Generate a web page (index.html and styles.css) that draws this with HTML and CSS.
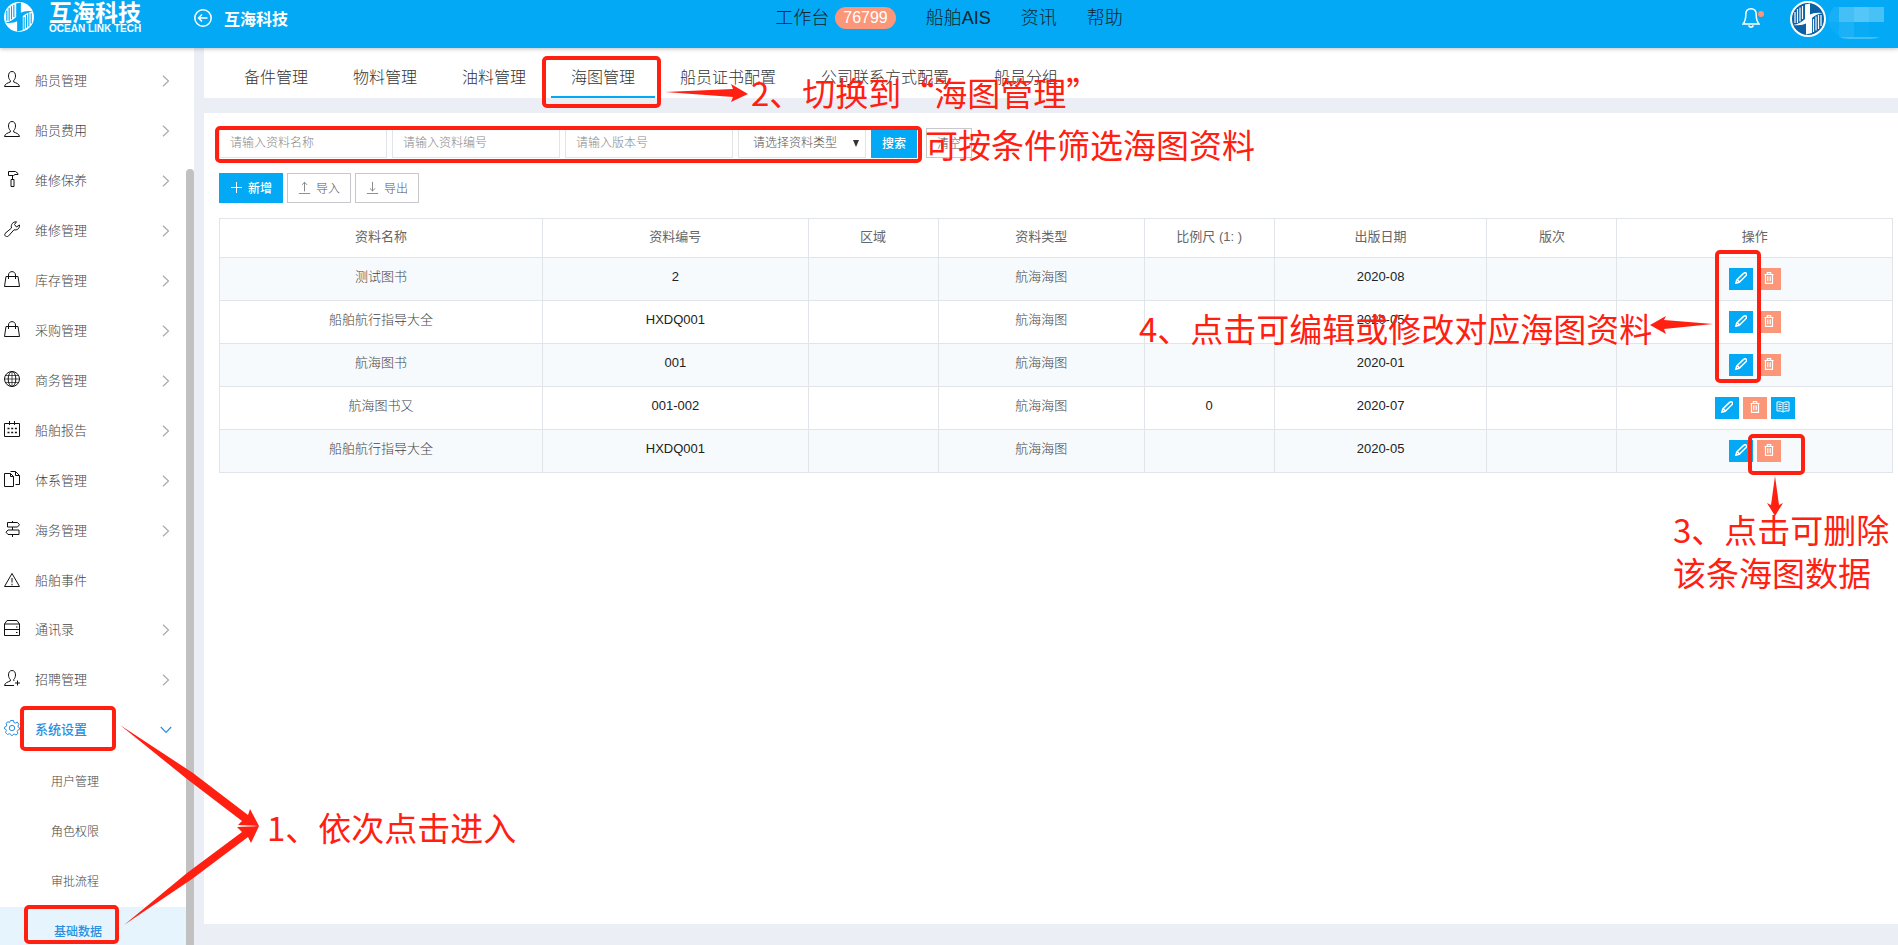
FILE: index.html
```html
<!DOCTYPE html>
<html lang="zh-CN">
<head>
<meta charset="utf-8">
<title>互海科技</title>
<link rel="stylesheet" href="styles.css">
</head>
<body>
<svg class="defs" aria-hidden="true">
  <symbol id="mark" viewBox="0 0 32 32">
    <path d="M3 9v11M5.500 6v14M8 4.500v14M10.500 3v13M29 23v-11M26.500 26v-14M24 27.500v-14M21.500 29v-13" stroke="currentColor" stroke-width="1.200"/>
    <path d="M13 1.500 18 .5V11.500Q22 9 31 10Q24 11 20 15V30L14 31.500V20.500Q10 23 1 22Q8 21 13 16Z" fill="currentColor"/>
  </symbol>
  <symbol id="user" viewBox="0 0 16 16"><path d="M8 .5C5.500.5 4.500 2.500 4.500 5c0 2 .8 3.500 1.800 4.500v1.500C4 12 1 12.500.5 15.500h15C15 12.500 12 12 9.700 11V9.500C10.700 8.500 11.500 7 11.500 5 11.500 2.500 10.500.5 8 .5z"/></symbol>
  <symbol id="hammer" viewBox="0 0 16 16"><path d="M4.500.5h7l2.500 2v1h-3l-1.500 1H4.500zM8.500 4.500v4M7 8.500h3v7H7z"/></symbol>
  <symbol id="wrench" viewBox="0 0 16 16"><path d="M1 12.500 7.500 7C6.500 3.500 9 .5 12.500.8L10.500 3.500l2 2.500 3-2c.3 3.500-2.500 5.500-5.500 4.800L4 15.500c-2 .8-4-1-3-3z"/></symbol>
  <symbol id="bag" viewBox="0 0 16 16"><path d="M2 5.500h12l1.500 10H.5zM4.500 8V4c0-4.500 7-4.500 7 0v4"/></symbol>
  <symbol id="globe" viewBox="0 0 16 16"><circle cx="8" cy="8" r="7.500"/><ellipse cx="8" cy="8" rx="3.800" ry="7.500"/><path d="M8 .5v15M.5 8h15M2 4.500h12M2 11.500h12" stroke-width=".7"/></symbol>
  <symbol id="calendar" viewBox="0 0 16 16"><path d="M.5 2.500h15v13H.5zM5.500 0v4M10.500 0v4"/><path d="M3.500 7.500h9.500M3.500 11.500h9.500" stroke-width="1.600" stroke-dasharray="2 1.700"/></symbol>
  <symbol id="files" viewBox="0 0 16 16"><path d="M.5 2.500h6l3 3v10h-9zM6.500 2.500v3h3M6.500.5h5l4 4v9h-4M11.500.5v4h4"/></symbol>
  <symbol id="sign" viewBox="0 0 16 16"><path d="M8.500 0v1.500M8.500 6v3M8.500 13.500V16M3.500 1.500h10l2 2.200L13.500 6h-10zM4 9h11v4.500H4L2 11.200z"/></symbol>
  <symbol id="warn" viewBox="0 0 16 16"><path d="M8 2.500 15.500 15.500H.5zM8 7v4.500M8 12.800v1.500"/></symbol>
  <symbol id="server" viewBox="0 0 16 16"><path d="M.5 4 3 .5h10L15.500 4v11.500H.5zM.5 4h15M.5 9.500h15M12 7h1.500M12 12.500h1.500"/></symbol>
  <symbol id="useradd" viewBox="0 0 16 16"><path d="M10 11 9.700 9.500C10.700 8.500 11.500 7 11.500 5 11.500 2.500 10.500.5 8 .5S4.500 2.500 4.500 5c0 2 .8 3.500 1.800 4.500v1.500C4 12 1 12.500.5 15.500H10M13.500 10.500v5M11 13h5"/></symbol>
  <symbol id="gear" viewBox="0 0 16 16"><path d="M6.500.5h3l.4 2 1.500.7L13.200 2l1.700 2.300-1 1.700.4 1.300 1.200.5v1.500l-1.700.8-.6 1.400.8 1.800L12 15l-1.900-1-1 .5-.6 1.200h-1l-.8-1.500-1.300-.5L3.500 14.500 1.500 12.500 2.300 10.600 2 9.500.5 8.800V7.200L2.200 6.500l.6-1.400L2 3.300 4 1.700l1.500.8z"/><circle cx="8" cy="8" r="2.700"/></symbol>
  <symbol id="right" viewBox="0 0 8 12"><path d="M1 .8 6.500 6 1 11.200"/></symbol>
  <symbol id="down" viewBox="0 0 12 8"><path d="M.8 1 6 6.500 11.200 1"/></symbol>
  <symbol id="pencil" viewBox="0 0 12 12"><path d="M.8 11.200 1.800 8 8.300 1.600Q10 0 11.200 1.200T10.600 4L4.200 10.300zM2.500 8l1.800 1.800" fill="none" stroke="currentColor" stroke-width="1.500"/></symbol>
  <symbol id="trash" viewBox="0 0 12 12"><path d="M1.500 2.500h9M4.300 2.300V.7h3.400v1.600M2.500 2.500v8.800h7V2.500M4.800 4.300v5M7.200 4.300v5" fill="none" stroke="currentColor" stroke-width="1.200"/></symbol>
  <symbol id="book" viewBox="0 0 14 12"><path d="M7 2Q4.500.3 1 1v9q3.500-.7 6 1 2.500-1.700 6-1V1Q9.500.3 7 2zv9M2.500 3.300h3M2.500 5.500h3M2.500 7.700h3M8.500 3.300h3M8.500 5.500h3M8.500 7.700h3" fill="none" stroke="currentColor"/></symbol>
</svg>

<div class="app">
  <header class="header">
    <div class="header-left">
      <div class="brand">
        <span class="brand-mark"><svg><use href="#mark"/></svg></span>
        <div class="brand-text"><strong>互海科技</strong><span>OCEAN LINK TECH</span></div>
      </div>
      <a class="company" href="#">
        <svg class="back" viewBox="0 0 18 18"><circle cx="9" cy="9" r="8.200"/><path d="M13.500 9H5M8 5.500 4.500 9 8 12.500"/></svg>
        互海科技
      </a>
    </div>
    <nav class="topnav">
      <a href="#">工作台<span class="badge">76799</span></a>
      <a href="#">船舶AIS</a>
      <a href="#">资讯</a>
      <a href="#">帮助</a>
    </nav>
    <div class="account">
      <button class="bell" aria-label="通知">
        <svg viewBox="0 0 18 21"><path d="M9 .8C5.500.8 3.800 3 3.800 6.500 3.800 12 3.200 13.500 1 16h16c-2.200-2.500-2.800-4-2.800-9.500C14.200 3 12.500.8 9 .8zM6.500 17.500q2.500 3.500 5 0"/></svg>
        <i class="dot"></i>
      </button>
      <span class="avatar"><svg><use href="#mark"/></svg></span>
      <svg class="masked" viewBox="0 0 56 32">
        <path d="M11 0H6Q-1 8 1 15h10z" fill="#17aff6"/><path d="M0 15h11v14Q3 25 0 15z" fill="#0cacf6"/>
        <path d="M11 0h15v15H11z" fill="#45c0f7"/><path d="M26 0h15v15H26z" fill="#55c6f8"/><path d="M41 0h15v15H41z" fill="#48c1f7"/>
        <path d="M11 15h15v15H11z" fill="#1bb1f6"/><path d="M26 15h15v15H26z" fill="#0aabf5"/>
        <path d="M12 30h40q-4 2-10 2H20q-5 0-8-2z" fill="#42bff7"/>
      </svg>
    </div>
  </header>

  <div class="body">
    <aside class="sidebar">
      <nav class="menu">
        <a href="#"><svg><use href="#user"/></svg><span>船员管理</span><svg class="chev"><use href="#right"/></svg></a>
        <a href="#"><svg><use href="#user"/></svg><span>船员费用</span><svg class="chev"><use href="#right"/></svg></a>
        <a href="#"><svg><use href="#hammer"/></svg><span>维修保养</span><svg class="chev"><use href="#right"/></svg></a>
        <a href="#"><svg><use href="#wrench"/></svg><span>维修管理</span><svg class="chev"><use href="#right"/></svg></a>
        <a href="#"><svg><use href="#bag"/></svg><span>库存管理</span><svg class="chev"><use href="#right"/></svg></a>
        <a href="#"><svg><use href="#bag"/></svg><span>采购管理</span><svg class="chev"><use href="#right"/></svg></a>
        <a href="#"><svg><use href="#globe"/></svg><span>商务管理</span><svg class="chev"><use href="#right"/></svg></a>
        <a href="#"><svg><use href="#calendar"/></svg><span>船舶报告</span><svg class="chev"><use href="#right"/></svg></a>
        <a href="#"><svg><use href="#files"/></svg><span>体系管理</span><svg class="chev"><use href="#right"/></svg></a>
        <a href="#"><svg><use href="#sign"/></svg><span>海务管理</span><svg class="chev"><use href="#right"/></svg></a>
        <a href="#" class="leaf"><svg><use href="#warn"/></svg><span>船舶事件</span></a>
        <a href="#"><svg><use href="#server"/></svg><span>通讯录</span><svg class="chev"><use href="#right"/></svg></a>
        <a href="#"><svg><use href="#useradd"/></svg><span>招聘管理</span><svg class="chev"><use href="#right"/></svg></a>
        <a href="#" class="open"><svg><use href="#gear"/></svg><span>系统设置</span><svg class="chev chev-down"><use href="#down"/></svg></a>
      </nav>
      <nav class="submenu">
        <a href="#">用户管理</a>
        <a href="#">角色权限</a>
        <a href="#">审批流程</a>
        <a href="#" class="current">基础数据</a>
      </nav>
      <div class="thumb"></div>
    </aside>

    <main class="main">
      <nav class="tabs">
        <a href="#">备件管理</a>
        <a href="#">物料管理</a>
        <a href="#">油料管理</a>
        <a href="#" class="active">海图管理</a>
        <a href="#">船员证书配置</a>
        <a href="#">公司联系方式配置</a>
        <a href="#">船员分组</a>
      </nav>
      <section class="panel">
        <form class="filters">
          <input type="text" placeholder="请输入资料名称" aria-label="资料名称">
          <input type="text" placeholder="请输入资料编号" aria-label="资料编号">
          <input type="text" placeholder="请输入版本号" aria-label="版本号">
          <div class="select-wrap">
            <select aria-label="资料类型"><option>请选择资料类型</option></select>
            <svg viewBox="0 0 6 7"><path d="M0 0h6L3 7z"/></svg>
          </div>
          <button type="button" class="search">搜索</button>
          <button type="button" class="clear">清空</button>
        </form>
        <div class="tools">
          <button class="add"><svg viewBox="0 0 13 13"><path d="M6.500 1v11M1 6.500h11"/></svg>新增</button>
          <button><svg viewBox="0 0 13 15"><path d="M6.500 12V1.500M3.500 4.500l3-3 3 3M0 14.500h13"/></svg>导入</button>
          <button><svg viewBox="0 0 13 15"><path d="M6.500 1v10.500M3.500 8.500l3 3 3-3M0 14.500h13"/></svg>导出</button>
        </div>
        <table class="grid">
          <colgroup><col class="c-name"><col class="c-code"><col class="c-narrow"><col class="c-type"><col class="c-narrow"><col class="c-date"><col class="c-narrow"><col class="c-ops"></colgroup>
          <thead><tr><th>资料名称</th><th>资料编号</th><th>区域</th><th>资料类型</th><th>比例尺 (1: )</th><th>出版日期</th><th>版次</th><th>操作</th></tr></thead>
          <tbody>
            <tr><td>测试图书</td><td class="num">2</td><td></td><td>航海海图</td><td></td><td class="num">2020-08</td><td></td><td><div class="ops"><button aria-label="编辑"><svg><use href="#pencil"/></svg></button><button class="del" aria-label="删除"><svg><use href="#trash"/></svg></button></div></td></tr>
            <tr><td>船舶航行指导大全</td><td class="num">HXDQ001</td><td></td><td>航海海图</td><td></td><td class="num">2020-05</td><td></td><td><div class="ops"><button aria-label="编辑"><svg><use href="#pencil"/></svg></button><button class="del" aria-label="删除"><svg><use href="#trash"/></svg></button></div></td></tr>
            <tr><td>航海图书</td><td class="num">001</td><td></td><td>航海海图</td><td></td><td class="num">2020-01</td><td></td><td><div class="ops"><button aria-label="编辑"><svg><use href="#pencil"/></svg></button><button class="del" aria-label="删除"><svg><use href="#trash"/></svg></button></div></td></tr>
            <tr><td>航海图书又</td><td class="num">001-002</td><td></td><td>航海海图</td><td class="num">0</td><td class="num">2020-07</td><td></td><td><div class="ops"><button aria-label="编辑"><svg><use href="#pencil"/></svg></button><button class="del" aria-label="删除"><svg><use href="#trash"/></svg></button><button aria-label="查看"><svg class="wide"><use href="#book"/></svg></button></div></td></tr>
            <tr><td>船舶航行指导大全</td><td class="num">HXDQ001</td><td></td><td>航海海图</td><td></td><td class="num">2020-05</td><td></td><td><div class="ops"><button aria-label="编辑"><svg><use href="#pencil"/></svg></button><button class="del" aria-label="删除"><svg><use href="#trash"/></svg></button></div></td></tr>
          </tbody>
        </table>
      </section>
    </main>
  </div>

  <div class="notes">
    <svg class="marks">
      <g class="frames">
        <rect x="544" y="58" width="115" height="48" rx="3"/>
        <rect x="217" y="128" width="703" height="33" rx="3"/>
        <rect x="22" y="708" width="92" height="41" rx="3"/>
        <rect x="26" y="907" width="91" height="35" rx="3"/>
        <rect x="1717" y="252" width="42" height="129" rx="3"/>
        <rect x="1750" y="436" width="53" height="37" rx="3"/>
      </g>
      <g class="arrows">
        <path d="M120 725 193 773 248 815 250 809 259 826 238 825 242 821 187 779z"/>
        <path d="M124 925 187 873 242 832 237 827 259 826 251 843 248 837 192 879z"/>
        <path d="M665 92 733 89 731 84 748 94 731 102 733 97z"/>
        <path d="M1713 324 1664 320 1666 316 1650 325 1666 334 1664 329z"/>
        <path d="M1775 476 1779 505 1783 503 1775 516 1767 503 1771 505z"/>
      </g>
    </svg>
    <p class="note note-enter">1、依次点击进入</p>
    <p class="note note-switch">2、切换到“海图管理”</p>
    <p class="note note-filter">可按条件筛选海图资料</p>
    <p class="note note-delete">3、点击可删除<br>该条海图数据</p>
    <p class="note note-edit">4、点击可编辑或修改对应海图资料</p>
  </div>
</div>
</body>
</html>
```

FILE: styles.css
```css
* { box-sizing: border-box; }
body {
  margin: 0;
  font-family: "Liberation Sans", "Noto Sans CJK SC", sans-serif;
  font-size: 13px;
  font-weight: 300;
  color: #444;
}
a { color: inherit; text-decoration: none; }
button, input, select { font: inherit; margin: 0; }
svg { display: block; }
.defs { position: absolute; width: 0; height: 0; }

.app {
  position: relative;
  display: flex;
  flex-direction: column;
  height: 100vh;
  overflow: hidden;
  background: #ebeff5;
}

/* header */
.header {
  position: relative;
  z-index: 2;
  display: grid;
  grid-template-columns: 1fr auto 1fr;
  align-items: start;
  height: 48px;
  flex: none;
  background: #03a9f4;
  box-shadow: 0 1px 4px rgba(0, 0, 0, .25);
  color: #fff;
}
.header-left { display: flex; }
.brand { display: flex; gap: 15px; width: 194px; padding: 2px 0 0 4px; }
.brand-mark { width: 30px; height: 30px; border-radius: 15px; background: #fff; color: #03a9f4; }
.brand-mark svg { width: 30px; height: 30px; }
.brand-text { display: flex; flex-direction: column; }
.brand-text strong { font-size: 23px; line-height: 22px; font-weight: 700; }
.brand-text span { font-size: 10px; line-height: 9px; font-weight: 700; }
.company {
  display: flex;
  align-items: center;
  gap: 12px;
  padding-top: 6px;
  font-size: 16px;
  line-height: 24px;
  font-weight: 700;
}
.back { width: 18px; height: 18px; margin-bottom: 4px; fill: none; stroke: #fff; stroke-width: 1.5; }
.topnav {
  display: flex;
  gap: 30px;
  padding-top: 6px;
  font-size: 18px;
  line-height: 24px;
  color: #14242e;
}
.topnav a { display: flex; align-items: center; gap: 6px; }
.badge {
  padding: 0 8px;
  border-radius: 11px;
  background: #fb9678;
  color: #fff;
  font-size: 16px;
  line-height: 22px;
}
.account { display: flex; justify-content: flex-end; padding: 1px 14px 0 0; }
.bell { position: relative; width: 18px; height: 21px; margin: 7px 30px 0 0; padding: 0; border: 0; background: none; }
.bell svg { width: 18px; height: 21px; fill: none; stroke: #fff; stroke-width: 1.5; }
.dot { position: absolute; top: 3px; right: -4px; width: 6px; height: 6px; border-radius: 3px; background: #fb9678; }
.avatar { width: 36px; height: 36px; border-radius: 18px; border: 2px solid #fff; background: #0a62a4; }
.avatar svg { width: 32px; height: 32px; }
.masked { width: 56px; height: 32px; margin: 6px 0 0 2px; }

.body { display: flex; flex: 1; min-height: 0; }

/* sidebar */
.sidebar { position: relative; width: 194px; flex: none; padding-top: 8px; overflow: hidden; background: #fff; }
.menu a { display: flex; align-items: center; height: 50px; padding: 0 24px 0 4px; color: #444; }
.menu a.leaf { height: 49px; }
.menu svg { width: 16px; height: 16px; margin-top: -4px; fill: none; stroke: #111; stroke-width: 1; }
.menu span { margin-left: 15px; line-height: 20px; }
.menu svg.chev { width: 8px; height: 12px; margin: 0 0 0 auto; stroke: #aaa; stroke-width: 1.2; }
.menu svg.chev-down { width: 12px; height: 8px; margin-right: -2px; }
.menu a.open { color: #2a8fe0; font-weight: 500; }
.menu a.open svg { stroke: #2a8fe0; }
.submenu { padding-top: 2px; font-size: 12px; }
.submenu a { display: block; height: 50px; padding-left: 51px; line-height: 50px; color: #444; }
.submenu a.current { padding-left: 54px; background: #e6f4fe; color: #2a8fe0; font-weight: 500; }
.thumb { position: absolute; top: 121px; right: 0; bottom: 0; width: 8px; border-radius: 4px 4px 0 0; background: #c1c1c1; }

/* content */
.main { display: flex; flex-direction: column; flex: 1; gap: 15px; min-width: 0; padding: 0 0 21px 10px; }
.tabs { display: flex; gap: 5px; height: 50px; flex: none; padding-left: 20px; background: #fff; font-size: 16px; color: #333; }
.tabs a { padding: 8px 20px 0; line-height: 44px; }
.tabs a.active { height: 50px; border-bottom: 2px solid #03a9f4; }
.panel { flex: 1; padding: 15px 5px 0 15px; background: #fff; }

.filters { display: flex; gap: 5px; font-size: 12px; }
.filters input, .filters select {
  width: 168px;
  height: 30px;
  padding: 0 10px;
  border: 1px solid #e2e5e8;
  background: #fff;
  color: #555;
}
.filters input::placeholder { color: #888; opacity: 1; }
.select-wrap { position: relative; }
.filters select { width: 128px; padding: 0 14px; appearance: none; border-radius: 0; }
.select-wrap svg { position: absolute; top: 12px; right: 7px; width: 6px; height: 7px; fill: #333; pointer-events: none; }
.filters button { width: 46px; height: 30px; padding: 0 0 2px; border: 1px solid #c6c8cc; background: #fff; color: #555; }
.filters .search { border-color: #03a9f4; background: #03a9f4; color: #fff; font-weight: 500; }
.filters .clear { margin-left: 4px; }

.tools { display: flex; gap: 4px; padding: 15px 0; font-size: 12px; }
.tools button {
  display: flex;
  align-items: center;
  justify-content: center;
  gap: 5px;
  width: 64px;
  height: 30px;
  padding: 0 0 2px;
  border: 1px solid #c6c8cc;
  background: #fff;
  color: #555;
}
.tools svg { width: 13px; height: 13px; fill: none; stroke: #777; }
.tools .add { border-color: #03a9f4; background: #03a9f4; color: #fff; font-weight: 500; }
.tools .add svg { stroke: #fff; }

.grid { width: 100%; table-layout: fixed; border-collapse: collapse; text-align: center; }
.c-name { width: 19.3%; }
.c-code { width: 15.85%; }
.c-narrow { width: 7.77%; }
.c-type { width: 12.3%; }
.c-date { width: 12.7%; }
.c-ops { width: 16.45%; }
.grid th, .grid td { padding: 0; border: 1px solid #e1e5e9; line-height: 20px; }
.grid th { height: 39px; padding-bottom: 2px; font-weight: 400; color: #666; }
.grid td { height: 43px; padding-bottom: 5px; color: #444; }
.grid td:last-child { padding-bottom: 0; }
.grid td.num { color: #222; }
.grid tbody tr:nth-child(odd) { background: #f6fafd; }
.ops { display: flex; justify-content: center; gap: 4px; }
.ops button { display: flex; justify-content: center; width: 24px; height: 22px; padding: 4px 0 0; border: 0; background: #03a9f4; color: #fff; }
.ops .del { background: #fb9678; }
.ops svg { width: 12px; height: 12px; }
.ops svg.wide { width: 14px; }

/* annotations laid over the page */
.notes { position: absolute; inset: 0; z-index: 3; pointer-events: none; color: #ff2012; }
.marks { width: 100%; height: 100%; }
.frames { fill: none; stroke: #ff2012; stroke-width: 4; }
.arrows { fill: #ff2012; }
.note {
  position: absolute;
  margin: 0;
  font-family: "Noto Sans CJK SC", sans-serif;
  font-size: 33px;
  font-weight: 400;
  line-height: 43px;
  white-space: nowrap;
}
.note-enter { left: 267px; top: 806px; }
.note-switch { left: 751px; top: 71px; }
.note-filter { left: 925px; top: 123px; }
.note-delete { left: 1673px; top: 508px; }
.note-edit { left: 1139px; top: 307px; }
```
